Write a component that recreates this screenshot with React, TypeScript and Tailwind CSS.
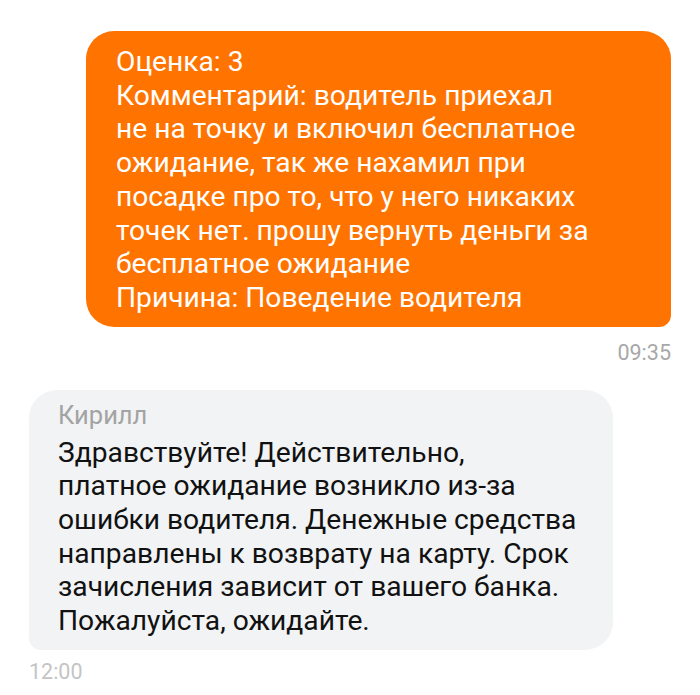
import React from "react";

const outgoing = [
    "Оценка: 3",
    "Комментарий: водитель приехал",
    "не на точку и включил бесплатное",
    "ожидание, так же нахамил при",
    "посадке про то, что у него никаких",
    "точек нет. прошу вернуть деньги за",
    "бесплатное ожидание",
    "Причина: Поведение водителя",
];

const incoming = [
    "Здравствуйте! Действительно,",
    "платное ожидание возникло из-за",
    "ошибки водителя. Денежные средства",
    "направлены к возврату на карту. Срок",
    "зачисления зависит от вашего банка.",
    "Пожалуйста, ожидайте.",
];

export default function App() {
    return (
        <div
            className="w-[700px] h-[695px] bg-white overflow-hidden"
            style={{ fontFamily: "Roboto, 'Noto Sans', sans-serif" }}
        >
            <div className="flex flex-col pt-[31px] px-[29px]">
                <div className="flex flex-col items-end">
                    <div className="w-[585px] bg-[#ff7300] text-white text-[28.2px] leading-[33.7px] pl-[30px] pr-4 pt-[14px] pb-[12px] rounded-[28px] rounded-br-[12px] whitespace-nowrap">
                        {outgoing.map((l, i) => (
                            <div key={i}>{l}</div>
                        ))}
                    </div>
                    <div className="text-[21.5px] text-[#a8a8a8] mt-[14px] leading-6">09:35</div>
                </div>

                <div className="flex flex-col items-start mt-[25px]">
                    <div className="w-[584px] bg-[#f2f3f5] text-[#111] rounded-[28px] rounded-bl-[12px] pl-[29px] pr-4 pt-[10px] pb-[12px] whitespace-nowrap">
                        <div className="text-[25.5px] text-[#a3a3a3] leading-[30px]">Кирилл</div>
                        <div className="text-[28.2px] leading-[33.7px] mt-[6px]">
                            {incoming.map((l, i) => (
                                <div key={i}>{l}</div>
                            ))}
                        </div>
                    </div>
                    <div className="text-[21.5px] text-[#c4c4c4] mt-[10px] leading-6">12:00</div>
                </div>
            </div>
        </div>
    );
}
